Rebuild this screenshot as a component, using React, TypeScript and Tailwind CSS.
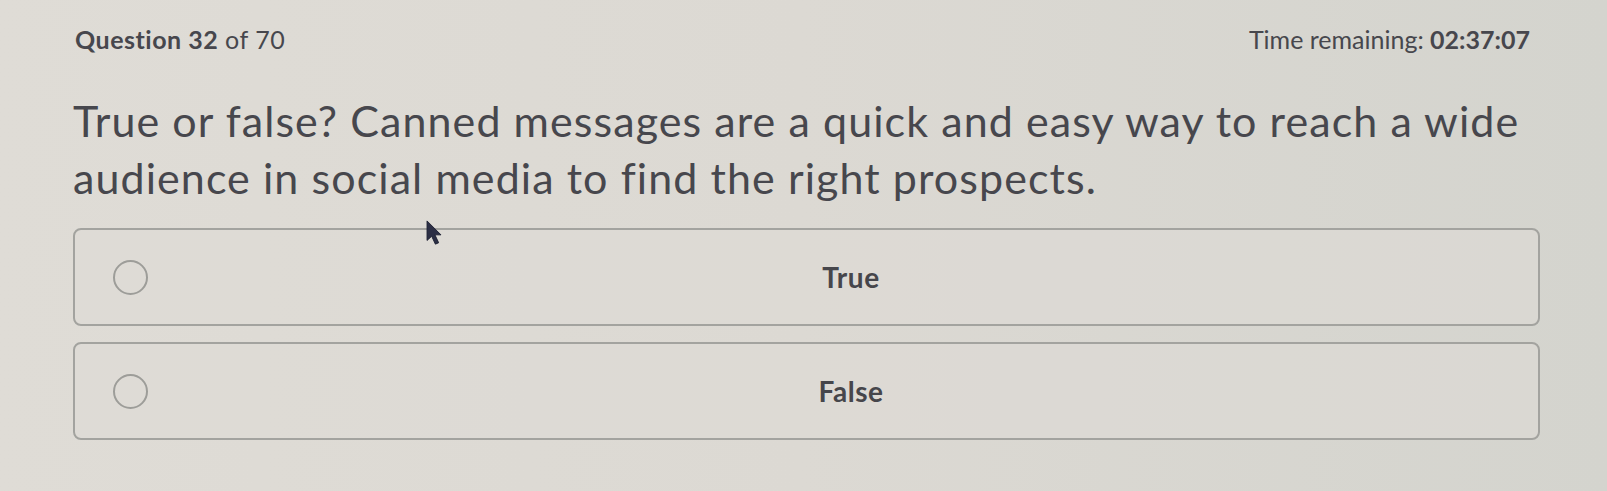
import React from 'react';

type Option = {
  id: string;
  label: string;
};

const options: Option[] = [
  { id: 'true', label: 'True' },
  { id: 'false', label: 'False' },
];

const Cursor = () => (
  <svg
    className="absolute left-[425px] top-[220px] h-[26px] w-[18px]"
    viewBox="0 0 19 28"
    fill="none"
  >
    <path d="M2 1 L2 22 L7 17.5 L11 26 L14.5 24.5 L10.5 16 L17 16 Z" fill="#2c2f45" stroke="#1d2033" strokeWidth="1" strokeLinejoin="round" />
  </svg>
);

export default function App() {
  return (
    <div className="relative h-[491px] w-full overflow-hidden bg-gradient-to-r from-[#dfdcd6] via-[#dcd9d3] to-[#d4d4ce] font-['Lato',sans-serif] text-[#47474d]">
      <header className="flex items-baseline justify-between pl-[75px] pr-[77px] pt-[24px] text-[25px] leading-[30px]">
        <div className="tracking-[0.02em]">
          <span className="font-bold">Question 32</span> of 70
        </div>
        <div>
          Time remaining: <span className="font-bold">02:37:07</span>
        </div>
      </header>

      <p className="mt-[38px] pl-[73px] pr-[50px] text-[43px] leading-[57px] tracking-[0.025em]">
        True or false? Canned messages are a quick and easy way to reach a wide audience in social media to find the right prospects.
      </p>

      <div className="ml-[73px] mr-[67px] mt-[22px] flex flex-col gap-[16px]">
        {options.map((option) => (
          <label
            key={option.id}
            className="flex h-[98px] cursor-pointer items-center rounded-[8px] border-2 border-[#a3a39f] bg-[#dddbd5]/60"
          >
            <span className="ml-[38px] h-[35px] w-[35px] shrink-0 rounded-full border-2 border-[#9d9d99]" />
            <span className="ml-4 flex-1 text-center text-[28px] font-bold tracking-[0.02em] text-[#46464b]">{option.label}</span>
          </label>
        ))}
      </div>

      <Cursor />
    </div>
  );
}
